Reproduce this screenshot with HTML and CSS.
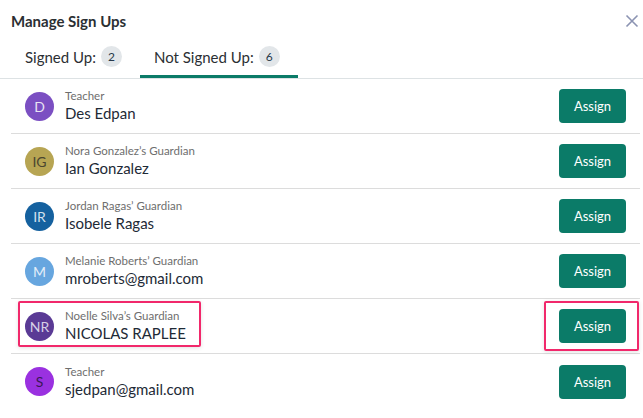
FILE: index.html
```html
<!DOCTYPE html>
<html lang="en">

<head>
    <meta charset="UTF-8">
    <meta name="viewport" content="width=device-width, initial-scale=1.0">
    <title>Manage Sign Ups</title>
    <link rel="stylesheet" href="styles.css">
</head>

<body>
    <div class="modal">
        <div class="modal-header">
            <h2>Manage Sign Ups</h2>
            <button class="close" aria-label="Close">
                <svg width="14" height="14" viewBox="0 0 14 14">
                    <path d="M1.5 1.5 L12.5 12.5 M12.5 1.5 L1.5 12.5" stroke="#8b93b2" stroke-width="1.6" fill="none" />
                </svg>
            </button>
        </div>

        <div class="tabs">
            <div class="tab">Signed Up: <span class="count">2</span></div>
            <div class="tab active">Not Signed Up: <span class="count">6</span></div>
        </div>

        <!-- list of people not signed up -->
        <ul class="people">
            <li class="row">
                <div class="person">
                    <span class="avatar av-purple">D</span>
                    <div class="info">
                        <div class="role">Teacher</div>
                        <div class="name">Des Edpan</div>
                    </div>
                </div>
                <div class="action"><button class="assign">Assign</button></div>
            </li>
            <li class="row">
                <div class="person">
                    <span class="avatar av-olive">IG</span>
                    <div class="info">
                        <div class="role">Nora Gonzalez’s Guardian</div>
                        <div class="name">Ian Gonzalez</div>
                    </div>
                </div>
                <div class="action"><button class="assign">Assign</button></div>
            </li>
            <li class="row">
                <div class="person">
                    <span class="avatar av-blue">IR</span>
                    <div class="info">
                        <div class="role">Jordan Ragas’ Guardian</div>
                        <div class="name">Isobele Ragas</div>
                    </div>
                </div>
                <div class="action"><button class="assign">Assign</button></div>
            </li>
            <li class="row">
                <div class="person">
                    <span class="avatar av-sky">M</span>
                    <div class="info">
                        <div class="role">Melanie Roberts’ Guardian</div>
                        <div class="name">mroberts@gmail.com</div>
                    </div>
                </div>
                <div class="action"><button class="assign">Assign</button></div>
            </li>
            <li class="row">
                <div class="person marked">
                    <span class="avatar av-plum">NR</span>
                    <div class="info">
                        <div class="role">Noelle Silva’s Guardian</div>
                        <div class="name">NICOLAS RAPLEE</div>
                    </div>
                </div>
                <div class="action marked"><button class="assign">Assign</button></div>
            </li>
            <li class="row">
                <div class="person">
                    <span class="avatar av-violet">S</span>
                    <div class="info">
                        <div class="role">Teacher</div>
                        <div class="name">sjedpan@gmail.com</div>
                    </div>
                </div>
                <div class="action"><button class="assign">Assign</button></div>
            </li>
        </ul>
    </div>
</body>

</html>
```

FILE: styles.css
```css
body {
    margin: 0;
    font-family: Lato, "Open Sans", sans-serif;
    background-color: #fff;
    color: #1e2a36;
}

.modal {
    width: 643px;
}

.modal-header {
    display: flex;
    align-items: center;
    justify-content: space-between;
    padding: 10px 3px 0 11px;
    height: 22px;
}

.modal-header h2 {
    margin: 0;
    font-size: 15px;
    font-weight: 700;
    color: #2b2f33;
}

.close {
    border: none;
    background: none;
    padding: 0;
    width: 16px;
    height: 16px;
    display: flex;
    align-items: center;
    justify-content: center;
    cursor: pointer;
}

.tabs {
    display: flex;
    margin-top: 6px;
    padding-left: 11px;
    border-bottom: 1px solid #dde2e4;
}

.tab {
    display: flex;
    align-items: center;
    gap: 5px;
    height: 40px;
    padding: 0 18px 0 14px;
    font-size: 15px;
    color: #2b2f33;
    border-bottom: 3px solid transparent;
    box-sizing: border-box;
}

.tab.active {
    border-bottom-color: #0b7b68;
}

.count {
    display: inline-flex;
    align-items: center;
    justify-content: center;
    width: 21px;
    height: 21px;
    border-radius: 50%;
    background-color: #e2e6e9;
    font-size: 12px;
    color: #27384a;
}

.people {
    list-style: none;
    margin: 0 3px 0 11px;
    padding: 0;
}

.row {
    display: flex;
    align-items: center;
    justify-content: space-between;
    box-sizing: border-box;
    height: 55px;
    padding: 0 14px;
    border-bottom: 1px solid #dcdcdc;
}

.row:last-child {
    border-bottom: none;
}

.person {
    display: flex;
    align-items: center;
    gap: 11px;
    position: relative;
}

.avatar {
    display: flex;
    align-items: center;
    justify-content: center;
    width: 29px;
    height: 29px;
    border-radius: 50%;
    font-size: 14px;
    color: #e8e4f2;
}

.av-purple { background-color: #7b4fc2; }
.av-olive { background-color: #b7a553; color: #4a4530; }
.av-blue { background-color: #15619f; color: #d2e0ee; }
.av-sky { background-color: #67a6df; color: #e4eef9; }
.av-plum { background-color: #5a3a95; color: #d6cfe6; }
.av-violet { background-color: #9a31e0; color: #3a1856; }

.role {
    font-size: 11.5px;
    color: #6e6e6e;
    line-height: 14px;
}

.name {
    font-size: 15px;
    color: #1e2a36;
    line-height: 20px;
}

.action {
    position: relative;
}

.assign {
    width: 67px;
    height: 34px;
    border: none;
    border-radius: 4px;
    background-color: #0b7b68;
    color: #fff;
    font-family: inherit;
    font-size: 13px;
    cursor: pointer;
}

/* highlight boxes drawn over the marked row */
.marked::after {
    content: "";
    position: absolute;
    border: 2px solid #f1286b;
    border-radius: 2px;
    box-shadow: 0 1px 4px rgba(0, 0, 0, 0.12);
    pointer-events: none;
}

.person.marked::after {
    left: -7px;
    top: -8px;
    width: 179px;
    height: 42px;
}

.action.marked::after {
    left: -15px;
    top: -8px;
    right: -13px;
    bottom: -8px;
}
```
